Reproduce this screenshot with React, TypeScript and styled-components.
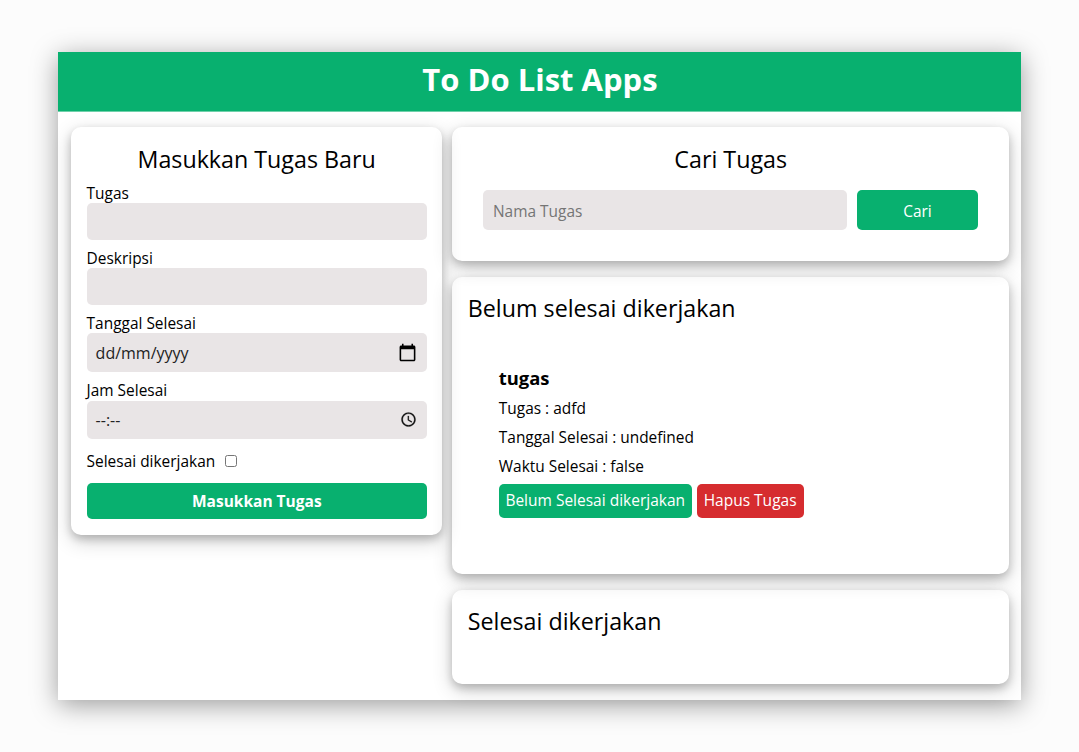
import React from "react";
import styled, { createGlobalStyle } from "styled-components";

const green = "#08b06f";
const fieldColor = "#e9e5e6";

const GlobalStyle = createGlobalStyle`
  * { box-sizing: border-box; margin: 0; padding: 0; }
  body {
    background: #fcfcfc;
    color: #000;
    font-family: "Open Sans", sans-serif;
    font-size: 16px;
    line-height: 22px;
    overflow: hidden;
  }
`;

const Page = styled.div`
  height: 752px;
  padding: 52px 58px;
`;

const AppWindow = styled.div`
  height: 648px;
  background: #fff;
  box-shadow: 0 5px 25px rgba(0, 0, 0, 0.38);
`;

const Header = styled.header`
  height: 59px;
  background: ${green};
  box-shadow: 0 1px 0 #6fd0aa;
  text-align: center;
`;

const Title = styled.h1`
  padding-left: 1px;
  color: #fff;
  font-size: 31px;
  font-weight: 700;
  line-height: 54px;
`;

const Columns = styled.main`
  display: flex;
  align-items: flex-start;
  gap: 10px;
  padding: 15.8px 12px 0 13px;
`;

const RightColumn = styled.div`
  flex: 1;
  display: flex;
  flex-direction: column;
  gap: 16px;
`;

const Card = styled.section<{ $height: number; $width?: number }>`
  width: ${(p) => (p.$width ? `${p.$width}px` : "auto")};
  height: ${(p) => p.$height}px;
  padding: 16px 16px 16px ${(p) => (p.$width ? "15.6px" : "15.8px")};
  border-radius: 10px;
  box-shadow: 0 4px 8px 0 rgba(0, 0, 0, 0.2), 0 6px 20px 0 rgba(0, 0, 0, 0.19);
`;

const Heading = styled.h2<{ $center?: boolean }>`
  height: 33px;
  padding-left: ${(p) => (p.$center ? 0.6 : 0)}px;
  font-size: 23.25px;
  font-weight: 400;
  line-height: ${(p) => (p.$center ? 32 : 30)}px;
  text-align: ${(p) => (p.$center ? "center" : "left")};
`;

const Field = styled.div<{ $gap: number }>`
  padding-top: ${(p) => p.$gap}px;
`;

const Label = styled.label<{ $line?: number }>`
  display: block;
  height: 21px;
  font-size: 15.45px;
  line-height: ${(p) => p.$line ?? 20}px;
`;

const FieldBox = styled.div<{ $height: number }>`
  display: flex;
  align-items: center;
  justify-content: space-between;
  width: 340.4px;
  height: ${(p) => p.$height}px;
  padding: 0 10px 0 9px;
  border-radius: 5px;
  background: ${fieldColor};
  color: #222;
`;

const TextField = styled.input`
  display: block;
  width: 340.4px;
  height: 36.5px;
  padding: 8px;
  border: 0;
  border-radius: 5px;
  background: ${fieldColor};
`;

const CheckRow = styled.div`
  display: flex;
  align-items: center;
  gap: 10px;
  height: 21px;
  margin-top: 12px;
`;

const CheckBox = styled.input`
  width: 12px;
  height: 12px;
`;

const SubmitButton = styled.button`
  display: block;
  width: 340.4px;
  height: 36.4px;
  margin-top: 11.2px;
  border: 0;
  border-radius: 5px;
  background: ${green};
  color: #fff;
  font: 700 15.5px "Open Sans", sans-serif;
`;

const SearchForm = styled.form`
  display: flex;
  gap: 10px;
  padding: 14.5px 15px 0 15.2px;
`;

const SearchInput = styled.input`
  width: 364px;
  height: 40px;
  padding: 1px 10px 0;
  border: 0;
  border-radius: 5px;
  background: ${fieldColor};
  font: 400 15.45px "Open Sans", sans-serif;
  &::placeholder { color: #757575; }
`;

const SearchButton = styled.button`
  width: 121px;
  height: 40px;
  padding-top: 1px;
  border: 0;
  border-radius: 5px;
  background: ${green};
  color: #fff;
  font: 400 15.45px "Open Sans", sans-serif;
`;

const Task = styled.article`
  padding: 38px 31px 0 31px;
`;

const TaskTitle = styled.h3`
  height: 30px;
  font-size: 18.4px;
  font-weight: 700;
  line-height: 27px;
`;

const TaskLine = styled.p`
  font-size: 15.45px;
  line-height: 28.8px;
`;

const TaskActions = styled.div`
  display: flex;
  gap: 5px;
  padding-top: 3.4px;
`;

const ActionButton = styled.button<{ $color: string; $width: number }>`
  width: ${(p) => p.$width}px;
  height: 34.4px;
  border: 0;
  border-radius: 5px;
  background: ${(p) => p.$color};
  color: #fff;
  font: 400 15.5px "Open Sans", sans-serif;
  padding-bottom: 1px;
  white-space: nowrap;
`;

const CalendarIcon = () => (
  <svg width="19" height="19" viewBox="0 0 24 24" fill="#000">
    <path d="M20 3h-1V1h-2v2H7V1H5v2H4c-1.100 0-2 .9-2 2v16c0 1.100.9 2 2 2h16c1.100 0 2-.9 2-2V5c0-1.100-.9-2-2-2zm0 18H4V8h16v13z" />
  </svg>
);

const ClockIcon = () => (
  <svg width="17" height="17" viewBox="0 0 24 24" fill="#111" stroke="#111" strokeWidth="0.3">
    <path d="M11.990 2C6.470 2 2 6.480 2 12s4.470 10 9.990 10C17.520 22 22 17.520 22 12S17.520 2 11.990 2zM12 20c-4.420 0-8-3.580-8-8s3.580-8 8-8 8 3.580 8 8-3.580 8-8 8z M12.500 7H11v6l5.250 3.150.75-1.230-4.500-2.670z" />
  </svg>
);

export default function App() {
  return (
    <>
      <GlobalStyle />
      <Page>
        <AppWindow>
          <Header>
            <Title>To Do List Apps</Title>
          </Header>
          <Columns>
            <Card $height={407.8} $width={371}>
              <Heading $center>Masukkan Tugas Baru</Heading>
              <Field $gap={6.4}>
                <Label $line={22}>Tugas</Label>
                <TextField type="text" />
              </Field>
              <Field $gap={7.7}>
                <Label $line={22}>Deskripsi</Label>
                <TextField type="text" />
              </Field>
              <Field $gap={7.4}>
                <Label $line={22}>Tanggal Selesai</Label>
                <FieldBox $height={38.6}>
                  <span>dd/mm/yyyy</span>
                  <CalendarIcon />
                </FieldBox>
              </Field>
              <Field $gap={7.8}>
                <Label>Jam Selesai</Label>
                <FieldBox $height={38}>
                  <span>--:--</span>
                  <ClockIcon />
                </FieldBox>
              </Field>
              <CheckRow>
                <Label>Selesai dikerjakan</Label>
                <CheckBox type="checkbox" />
              </CheckRow>
              <SubmitButton>Masukkan Tugas</SubmitButton>
            </Card>
            <RightColumn>
              <Card $height={134.2}>
                <Heading $center>Cari Tugas</Heading>
                <SearchForm>
                  <SearchInput placeholder="Nama Tugas" />
                  <SearchButton type="button">Cari</SearchButton>
                </SearchForm>
              </Card>
              <Card $height={297.2}>
                <Heading>Belum selesai dikerjakan</Heading>
                <Task>
                  <TaskTitle>tugas</TaskTitle>
                  <TaskLine>Tugas : adfd</TaskLine>
                  <TaskLine>Tanggal Selesai : undefined</TaskLine>
                  <TaskLine>Waktu Selesai : false</TaskLine>
                  <TaskActions>
                    <ActionButton $color={green} $width={192.8}>Belum Selesai dikerjakan</ActionButton>
                    <ActionButton $color="#d62c2f" $width={107}>Hapus Tugas</ActionButton>
                  </TaskActions>
                </Task>
              </Card>
              <Card $height={94}>
                <Heading>Selesai dikerjakan</Heading>
              </Card>
            </RightColumn>
          </Columns>
        </AppWindow>
      </Page>
    </>
  );
}
